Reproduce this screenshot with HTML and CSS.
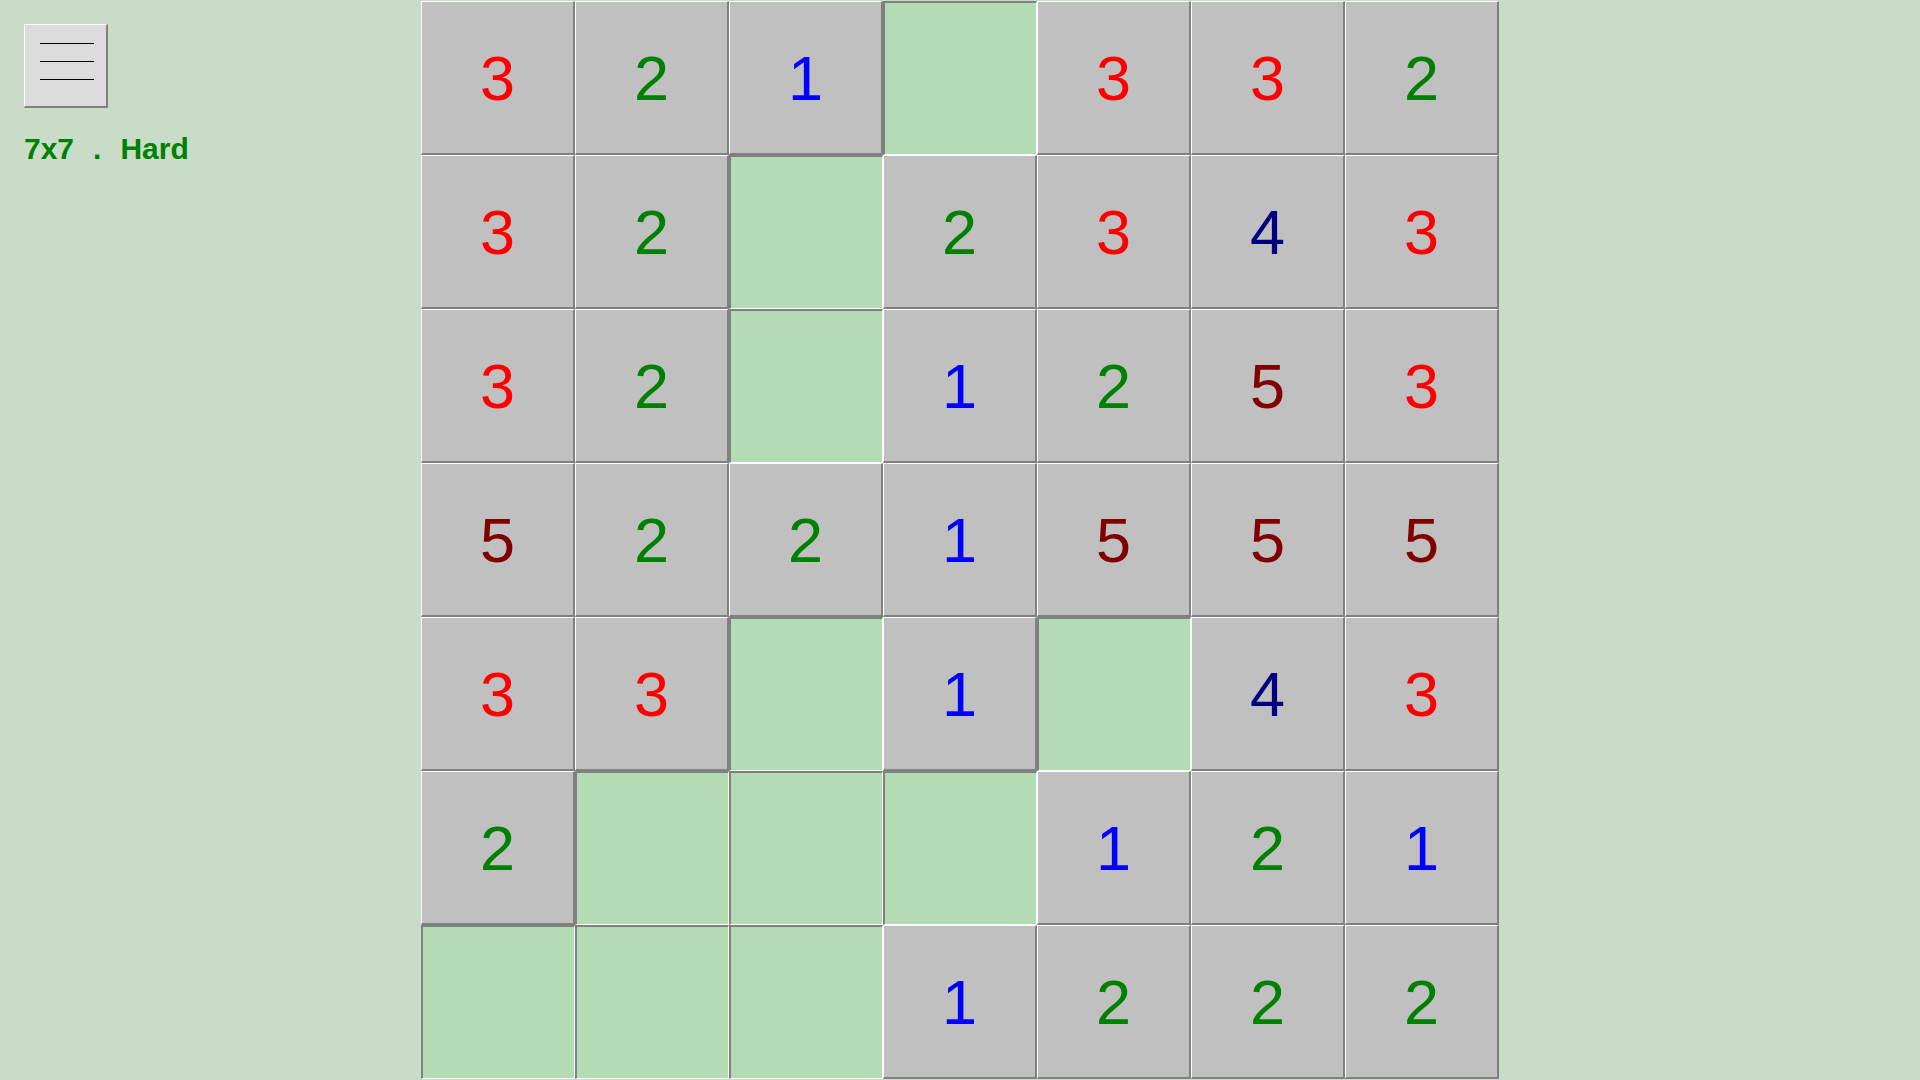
FILE: index.html
```html
<!DOCTYPE html>
<html>
<head>
<meta charset="utf-8">
<title>7x7 Hard</title>
<link rel="stylesheet" href="styles.css">
</head>
<body>
<div class="page">
  <aside class="panel">
    <button class="menu" type="button" aria-label="Menu">
      <span class="bar"></span>
      <span class="bar"></span>
      <span class="bar"></span>
    </button>
    <div class="info"><span>7x7</span><span>.</span><span>Hard</span></div>
  </aside>
  <main class="board">
    <div class="cell n3">3</div><div class="cell n2">2</div><div class="cell n1">1</div><div class="cell open"></div><div class="cell n3">3</div><div class="cell n3">3</div><div class="cell n2">2</div>
    <div class="cell n3">3</div><div class="cell n2">2</div><div class="cell open"></div><div class="cell n2">2</div><div class="cell n3">3</div><div class="cell n4">4</div><div class="cell n3">3</div>
    <div class="cell n3">3</div><div class="cell n2">2</div><div class="cell open"></div><div class="cell n1">1</div><div class="cell n2">2</div><div class="cell n5">5</div><div class="cell n3">3</div>
    <div class="cell n5">5</div><div class="cell n2">2</div><div class="cell n2">2</div><div class="cell n1">1</div><div class="cell n5">5</div><div class="cell n5">5</div><div class="cell n5">5</div>
    <div class="cell n3">3</div><div class="cell n3">3</div><div class="cell open"></div><div class="cell n1">1</div><div class="cell open"></div><div class="cell n4">4</div><div class="cell n3">3</div>
    <div class="cell n2">2</div><div class="cell open"></div><div class="cell open"></div><div class="cell open"></div><div class="cell n1">1</div><div class="cell n2">2</div><div class="cell n1">1</div>
    <div class="cell open"></div><div class="cell open"></div><div class="cell open"></div><div class="cell n1">1</div><div class="cell n2">2</div><div class="cell n2">2</div><div class="cell n2">2</div>
  </main>
  <div class="spacer"></div>
</div>
</body>
</html>
```

FILE: styles.css
```css
html, body {
  margin: 0;
  padding: 0;
  width: 1920px;
  height: 1080px;
  overflow: hidden;
  background: #c8dcc8;
  font-family: "Liberation Sans", Arial, sans-serif;
}

.page {
  display: grid;
  grid-template-columns: 1fr 1078px 1fr;
  height: 1080px;
}

.panel {
  padding: 24px 0 0 24px;
}

.menu {
  display: flex;
  flex-direction: column;
  gap: 17px;
  box-sizing: border-box;
  width: 84px;
  height: 84px;
  margin: 0;
  padding: 18px 0 0 15px;
  background: #dcdcdc;
  border-top: 1px solid #ffffff;
  border-left: 1px solid #ffffff;
  border-right: 2px solid #808080;
  border-bottom: 2px solid #808080;
  cursor: pointer;
}

.bar {
  display: block;
  width: 54px;
  height: 0;
  border-top: 1px solid #000000;
}

.info {
  display: flex;
  gap: 19px;
  margin-top: 24px;
  font-size: 30px;
  line-height: 34px;
  font-weight: bold;
  color: #008000;
  white-space: nowrap;
}

.board {
  display: grid;
  grid-template-columns: repeat(7, 154px);
  grid-template-rows: repeat(7, 154px);
  margin-top: 1px;
  align-self: start;
}

.cell {
  box-sizing: border-box;
  display: flex;
  align-items: center;
  justify-content: center;
  background: #c0c0c0;
  border-top: 1px solid #ffffff;
  border-left: 1px solid #ffffff;
  border-right: 2px solid #808080;
  border-bottom: 2px solid #808080;
  font-size: 63px;
  line-height: 1;
  padding-top: 2px;
}

.cell.open {
  background: #b4dcb4;
  border-top: 2px solid #808080;
  border-left: 2px solid #808080;
  border-right: 1px solid #ffffff;
  border-bottom: 1px solid #ffffff;
}

.n1 { color: #0000ff; }
.n2 { color: #008000; }
.n3 { color: #ff0000; }
.n4 { color: #000080; }
.n5 { color: #800000; }
```
